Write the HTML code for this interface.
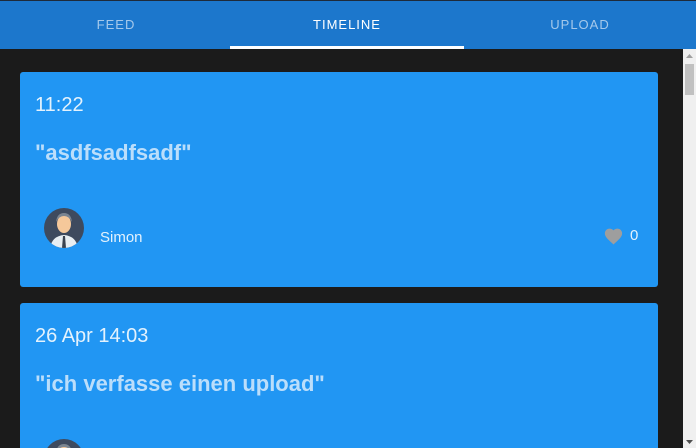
<!DOCTYPE html>
<html style="height:448px;overflow:hidden"><head><style>
body{margin:0;width:696px;height:448px;overflow:hidden;background:#1b1b1b;font-family:"Liberation Sans",sans-serif;position:relative}
.top{position:absolute;left:0;top:0;width:696px;height:1px;background:#1e2a3a}
.bar{position:absolute;left:0;top:1px;width:696px;height:48px;background:#1c77cc}
.tab{position:absolute;top:17px;font-size:13px;letter-spacing:1px;color:rgba(255,255,255,.6);width:232px;text-align:center}
.ind{position:absolute;left:230px;top:46px;width:234px;height:3px;background:#fff}
.sb{position:absolute;left:683px;top:49px;width:13px;height:399px;background:#f0f0f0}
.thumb{position:absolute;left:685px;top:64px;width:9px;height:31px;background:#c1c1c1}
.card{position:absolute;left:20px;width:638px;background:#2196f3;border-radius:3px;overflow:hidden}
.time{position:absolute;left:15px;font-size:20px;font-weight:300;color:#e3f2fd}
.title{position:absolute;left:15px;font-size:22px;font-weight:bold;color:#bbdefb}
.av{position:absolute;left:24px;width:40px;height:40px;border-radius:50%;background:#3e4a5e;overflow:hidden}
.name{position:absolute;left:80px;font-size:15px;color:#e3f2fd}
</style></head><body>
<div class="top"></div>
<div class="bar"></div>
<div class="tab" style="left:0">FEED</div>
<div class="tab" style="left:231px;color:#fff">TIMELINE</div>
<div class="tab" style="left:464px">UPLOAD</div>
<div class="ind"></div>
<div class="card" style="top:72px;height:215px">
 <div class="time" style="top:22px">11:22</div>
 <div class="title" style="top:68px">"asdfsadfsadf"</div>
 <div class="av" style="top:136px"><svg width="40" height="40"><path d="M6 40 Q8 28 20 27 Q32 28 34 40Z" fill="#e8eef2"/><path d="M19 28 L21 28 L22 40 L18 40Z" fill="#3a4350"/><ellipse cx="20" cy="16" rx="7" ry="9" fill="#f5c89a"/><path d="M12 14 Q13 5 20 5 Q27 5 28 14 Q25 8 20 8 Q15 8 12 14Z" fill="#7b8591"/></svg></div>
 <div class="name" style="top:157px">Simon</div>
 <svg style="position:absolute;left:583px;top:154px" width="21" height="19" viewBox="0 0 24 22"><path d="M12 21.35l-1.45-1.32C5.4 15.36 2 12.28 2 8.5 2 5.42 4.42 3 7.5 3c1.74 0 3.41.81 4.5 2.09C13.09 3.81 14.76 3 16.5 3 19.58 3 22 5.42 22 8.5c0 3.78-3.4 6.86-8.55 11.54L12 21.35z" fill="#9e9e9e"/></svg>
 <div class="name" style="left:610px;top:155px">0</div>
</div>
<div class="card" style="top:303px;height:145px;border-radius:3px 3px 0 0">
 <div class="time" style="top:22px">26 Apr 14:03</div>
 <div class="title" style="top:68px">"ich verfasse einen upload"</div>
 <svg style="position:absolute;left:24px;top:136px" width="40" height="9"><circle cx="20" cy="20" r="20" fill="#3e4a5e"/><ellipse cx="20" cy="16" rx="7" ry="9" fill="#f5c89a"/><path d="M12 14 Q13 5 20 5 Q27 5 28 14 Q25 8 20 8 Q15 8 12 14Z" fill="#7b8591"/></svg>
</div>
<div class="sb"></div>
<div class="thumb"></div>
<svg style="position:absolute;left:685px;top:53px" width="9" height="6"><path d="M1 5 L4.5 1 L8 5Z" fill="#a0a0a0"/></svg>
<svg style="position:absolute;left:685px;top:439px" width="9" height="6"><path d="M1 1 L4.5 5 L8 1Z" fill="#505050"/></svg>
</body></html>
